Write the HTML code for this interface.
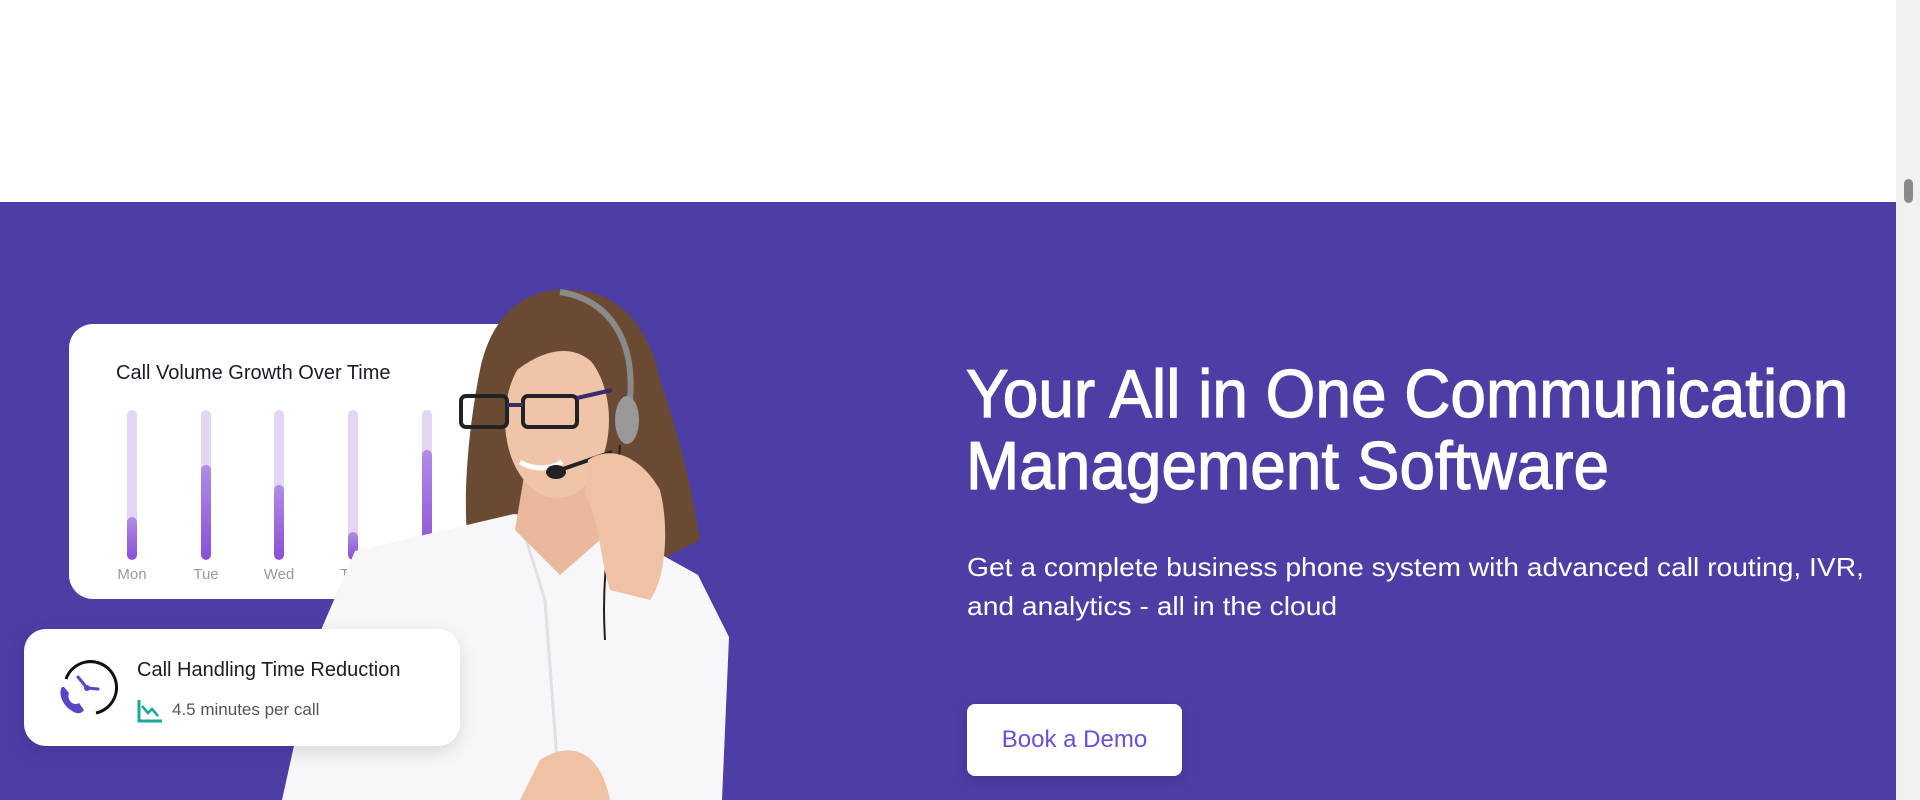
<!DOCTYPE html>
<html><head><meta charset="utf-8"><style>
*{margin:0;padding:0;box-sizing:border-box}
body{width:1920px;height:800px;overflow:hidden;background:#fff;font-family:"Liberation Sans",sans-serif;position:relative}
.band{position:absolute;left:0;top:202px;width:1896px;height:598px;background:#4d3ea6}
.sb{position:absolute;right:0;top:0;width:24px;height:800px;background:#f1f1f1}
.sb .th{position:absolute;left:8px;top:179px;width:9px;height:24px;border-radius:5px;background:#8a8a8a}
h1{position:absolute;left:966px;top:358px;color:#fff;font-size:68px;line-height:72px;font-weight:400;-webkit-text-stroke:1.2px #fff;white-space:nowrap;transform:scaleX(0.94);transform-origin:left top}
.sub{position:absolute;left:967px;top:548px;color:#fff;font-size:26px;line-height:39px;white-space:nowrap;transform:scaleX(1.085);transform-origin:left top}
.btn{position:absolute;left:967px;top:704px;width:215px;height:72px;background:#fff;border-radius:8px;color:#6a4fd8;font-size:24px;text-align:center;line-height:72px;box-shadow:0 4px 12px rgba(0,0,0,.15)}
.card1{position:absolute;left:69px;top:324px;width:460px;height:275px;background:#fff;border-radius:24px}
.card1 .t{position:absolute;left:47px;top:38px;font-size:20px;color:#1b1b2a}
.bar{position:absolute;top:86px;width:10px;height:150px;border-radius:5px;background:#e3d6f5;overflow:hidden}
.bar i{position:absolute;left:0;bottom:0;width:10px;border-radius:5px;background:linear-gradient(#b18ce6,#8a4fd6)}
.lbl{position:absolute;top:242px;font-size:15px;color:#9a9a9a;width:60px;text-align:center}
.card2{position:absolute;left:24px;top:629px;width:436px;height:117px;background:#fff;border-radius:22px;box-shadow:0 6px 18px rgba(0,0,0,.12)}
.card2 .t{position:absolute;left:113px;top:30px;font-size:20px;color:#1b1b2a}
.card2 .s{position:absolute;left:148px;top:71px;font-size:17px;color:#555}
</style></head><body>
<div class="band"></div>
<div class="card1">
 <div class="t">Call Volume Growth Over Time</div>
 <div class="bar" style="left:58px"><i style="height:43px"></i></div>
 <div class="bar" style="left:132px"><i style="height:95px"></i></div>
 <div class="bar" style="left:205px"><i style="height:75px"></i></div>
 <div class="bar" style="left:279px"><i style="height:28px"></i></div>
 <div class="bar" style="left:353px"><i style="height:110px"></i></div>
 <div class="lbl" style="left:33px">Mon</div>
 <div class="lbl" style="left:107px">Tue</div>
 <div class="lbl" style="left:180px">Wed</div>
 <div class="lbl" style="left:254px">Thu</div>
</div>
<svg style="position:absolute;left:0;top:0" width="1896" height="800">
 <path d="M557,290 C620,285 650,330 660,380 C680,440 690,480 700,540 L660,560 L470,560 C460,500 470,420 480,370 C490,320 520,292 557,290Z" fill="#6b4a34"/>
 <path d="M355,551 L514,514 L612,527 L698,575 L729,637 L722,800 L282,800 L318,637Z" fill="#f7f6f8"/>
 <path d="M520,520 L545,600 L560,800" stroke="#e2e0e6" stroke-width="3" fill="none"/>
 <path d="M525,470 L590,470 L600,540 L560,575 L515,530Z" fill="#eab99d"/>
 <ellipse cx="557" cy="420" rx="52" ry="78" fill="#f0c4a8"/>
 <path d="M505,380 C510,320 540,300 580,305 C600,330 610,360 612,400 C600,350 560,330 505,380Z" fill="#6b4a34"/>
 <rect x="461" y="396" width="46" height="31" rx="5" fill="none" stroke="#222" stroke-width="4"/>
 <rect x="523" y="396" width="54" height="31" rx="5" fill="none" stroke="#222" stroke-width="4"/>
 <path d="M507,405 L523,405 M577,398 L612,390" stroke="#3a2b6a" stroke-width="4"/>
 <path d="M520,462 C533,470 550,470 562,462" stroke="#fff" stroke-width="5" fill="none"/>
 <path d="M560,292 C610,300 635,340 630,400" stroke="#8a8a8a" stroke-width="6" fill="none"/>
 <ellipse cx="627" cy="420" rx="12" ry="24" fill="#999"/>
 <path d="M612,452 L560,470" stroke="#222" stroke-width="4"/>
 <ellipse cx="556" cy="472" rx="10" ry="7" fill="#222"/>
 <path d="M620,445 C615,520 600,560 605,640" stroke="#222" stroke-width="2" fill="none"/>
 <path d="M588,460 C610,445 640,455 660,490 C670,530 665,580 650,600 L610,590 C600,560 600,520 585,495Z" fill="#efc2a6"/>
 <path d="M540,760 C570,740 600,750 610,800 L520,800Z" fill="#efc2a6"/>
</svg>
<div class="card2">
 <svg style="position:absolute;left:32px;top:28px" width="62" height="62" viewBox="0 0 62 62">
  <path d="M10,22 A26,26 0 1 1 40,56" fill="none" stroke="#111" stroke-width="3"/>
  <path d="M31,31 L22,20 M31,31 L42,32" stroke="#5a45c9" stroke-width="3" stroke-linecap="round"/>
  <circle cx="31" cy="31" r="3" fill="#5a45c9"/>
  <path d="M6,30 C2,36 6,48 16,54 C22,58 26,56 28,53 L23,46 C21,47 18,48 15,45 C12,42 12,38 13,36 L8,30Z" fill="#5a45c9"/>
 </svg>
 <div class="t">Call Handling Time Reduction</div>
 <svg style="position:absolute;left:113px;top:69px" width="26" height="26" viewBox="0 0 26 26">
  <path d="M2,2 L2,23 L25,23" fill="none" stroke="#17a89c" stroke-width="3"/>
  <path d="M5,8 L11,15 L15,11 L21,18" fill="none" stroke="#17a89c" stroke-width="2.5"/>
 </svg>
 <div class="s">4.5 minutes per call</div>
</div>
<h1>Your All in One Communication<br>Management Software</h1>
<div class="sub">Get a complete business phone system with advanced call routing, IVR,<br>and analytics - all in the cloud</div>
<div class="btn">Book a Demo</div>
<div class="sb"><div class="th"></div></div>
</body></html>
